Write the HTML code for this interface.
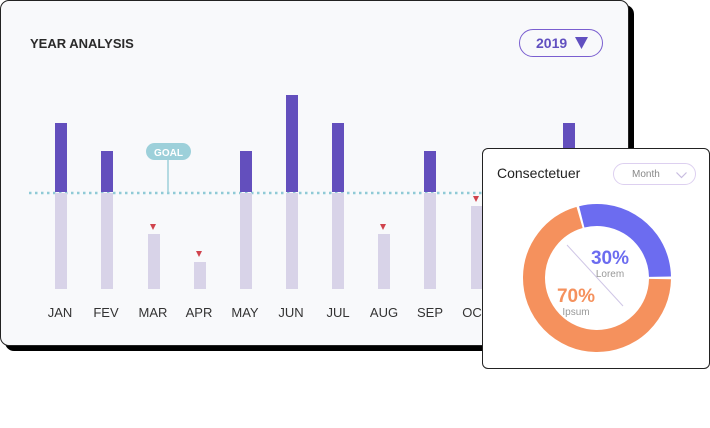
<!DOCTYPE html>
<html><head><style>
body{margin:0;width:710px;height:428px;background:#fff;position:relative;overflow:hidden;font-family:"Liberation Sans",sans-serif}
.card{position:absolute;left:0;top:0;width:627px;height:344px;background:#f8f9fb;border:1px solid #222;border-radius:9px;box-shadow:5px 5px 0 #000}
.t{position:absolute;left:29px;top:35px;font-weight:bold;font-size:13px;color:#2a2a2a}
.pill{position:absolute;left:518px;top:28px;width:82px;height:26px;border:1.5px solid #7a5fd0;border-radius:14px;color:#6150c0;font-weight:bold;font-size:14px;line-height:26px}
.b{position:absolute;width:12px}
.p{background:#634fbd}.l{background:#d8d3e8}
.lab{position:absolute;top:305px;font-size:13px;color:#333;width:46px;text-align:center}
.tri{position:absolute;width:0;height:0;border-left:3.5px solid transparent;border-right:3.5px solid transparent;border-top:6px solid #d0434d}
.pop{position:absolute;left:482px;top:148px;width:226px;height:219px;background:#fff;border:1px solid #222;border-radius:6px}
</style></head><body>
<div class="card">
<div class="t">YEAR ANALYSIS</div>
<div class="pill"><span style="position:absolute;left:16px">2019</span><svg style="position:absolute;left:55px;top:7px" width="14" height="12"><path d="M0 0H13L6.5 12Z" fill="#6150c0"/></svg></div>
<svg style="position:absolute;left:0;top:0" width="630" height="345"><line x1="28" y1="192" x2="627" y2="192" stroke="#8fcad6" stroke-width="2.5" stroke-dasharray="2.5 3.5"/>
<line x1="167" y1="158" x2="167" y2="192" stroke="#9dd0da" stroke-width="1.5"/>
<rect x="145" y="142" width="45" height="17" rx="8.5" fill="#9dd0da"/>
<text x="167.5" y="155" text-anchor="middle" font-size="10" font-weight="bold" fill="#fff" font-family="Liberation Sans">GOAL</text></svg>
</div>
<div class="b p" style="left:55px;top:123px;height:69px"></div><div class="b l" style="left:55px;top:193px;height:96px"></div>
<div class="b p" style="left:101px;top:151px;height:41px"></div><div class="b l" style="left:101px;top:193px;height:96px"></div>
<div class="b l" style="left:148px;top:234px;height:55px"></div><div class="tri" style="left:150px;top:224px"></div>
<div class="b l" style="left:194px;top:262px;height:27px"></div><div class="tri" style="left:196px;top:251px"></div>
<div class="b p" style="left:240px;top:151px;height:41px"></div><div class="b l" style="left:240px;top:193px;height:96px"></div>
<div class="b p" style="left:286px;top:95px;height:97px"></div><div class="b l" style="left:286px;top:193px;height:96px"></div>
<div class="b p" style="left:332px;top:123px;height:69px"></div><div class="b l" style="left:332px;top:193px;height:96px"></div>
<div class="b l" style="left:378px;top:234px;height:55px"></div><div class="tri" style="left:380px;top:224px"></div>
<div class="b p" style="left:424px;top:151px;height:41px"></div><div class="b l" style="left:424px;top:193px;height:96px"></div>
<div class="b l" style="left:471px;top:206px;height:83px"></div><div class="tri" style="left:473px;top:196px"></div>
<div class="b p" style="left:563px;top:123px;height:69px"></div>
<div class="lab" style="left:37px">JAN</div><div class="lab" style="left:83px">FEV</div><div class="lab" style="left:130px">MAR</div><div class="lab" style="left:176px">APR</div><div class="lab" style="left:222px">MAY</div><div class="lab" style="left:268px">JUN</div><div class="lab" style="left:315px">JUL</div><div class="lab" style="left:361px">AUG</div><div class="lab" style="left:407px">SEP</div><div class="lab" style="left:453px">OCT</div>
<div class="pop">
<div style="position:absolute;left:14px;top:16px;font-size:14px;color:#222">Consectetuer</div>
<div style="position:absolute;left:130px;top:14px;width:83px;height:22px;border:1px solid #ddd0f0;border-radius:11px;font-size:10px;color:#888;line-height:22px;padding-left:18px;box-sizing:border-box">Month<svg style="position:absolute;right:8px;top:8px" width="11" height="7"><path d="M0.5 0.5L5.5 5.5L10.5 0.5" fill="none" stroke="#c8bce0" stroke-width="1.2"/></svg></div>
<svg style="position:absolute;left:0;top:0" width="226" height="219">
<g transform="translate(114,129)">
<circle r="63" fill="none" stroke="#f5915d" stroke-width="22" stroke-dasharray="278 118" transform="rotate(1)"/>
<circle r="63" fill="none" stroke="#6c6cf0" stroke-width="22" stroke-dasharray="113 283" transform="rotate(-104)"/>
<line x1="-30" y1="-33" x2="26" y2="28" stroke="#cfc6e6" stroke-width="1"/>
<text x="13" y="-14" text-anchor="middle" font-size="19" font-weight="bold" fill="#6c6cf0" font-family="Liberation Sans">30%</text>
<text x="13" y="-1" text-anchor="middle" font-size="10" fill="#999" font-family="Liberation Sans">Lorem</text>
<text x="-21" y="24" text-anchor="middle" font-size="19" font-weight="bold" fill="#f5915d" font-family="Liberation Sans">70%</text>
<text x="-21" y="37" text-anchor="middle" font-size="10" fill="#999" font-family="Liberation Sans">Ipsum</text>
</g></svg>
</div>
</body></html>
